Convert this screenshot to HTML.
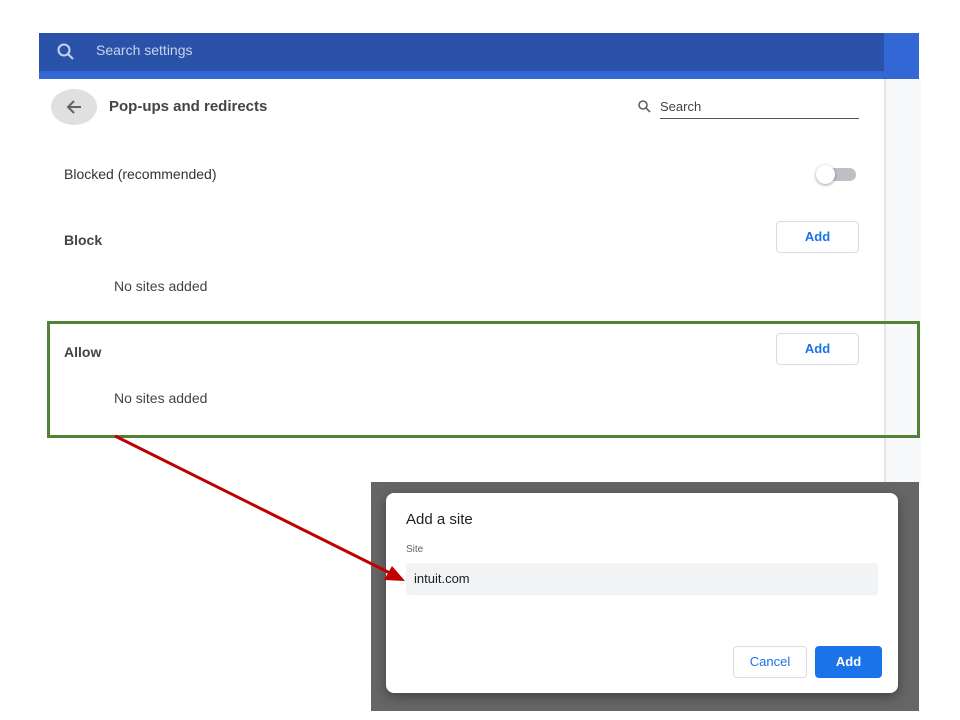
<!DOCTYPE html>
<html><head><style>
body{margin:0;width:960px;height:720px;background:#fff;position:relative;overflow:hidden;font-family:"Liberation Sans",sans-serif;}
.a{position:absolute;}
.btn{position:absolute;border:1px solid #dadce0;border-radius:4px;color:#1a73e8;font-weight:bold;font-size:13px;text-align:center;background:#fff;box-sizing:border-box;}
</style></head><body>
<div class="a" style="left:39px;top:33px;width:880px;height:46px;background:#3367d6"></div>
<div class="a" style="left:39px;top:33px;width:845px;height:38px;background:#2a52a8"></div>
<svg class="a" style="left:55px;top:41px" width="22" height="22" viewBox="0 0 22 22"><circle cx="9" cy="9" r="5.5" fill="none" stroke="#c8d4ee" stroke-width="2"/><path d="M13 13l5 5" stroke="#c8d4ee" stroke-width="2"/></svg>
<div class="a" style="left:96px;top:42px;color:#c8d4ee;font-size:14px">Search settings</div>
<div class="a" style="left:884px;top:79px;width:35px;height:406px;background:#f8f9fa;border-left:2px solid #e6e6e6"></div>
<div class="a" style="left:51px;top:89px;width:46px;height:36px;border-radius:50%;background:#e0e0e0"></div>
<svg class="a" style="left:64px;top:97px" width="20" height="20" viewBox="0 0 20 20"><path d="M17 10H4M10 4l-6 6 6 6" fill="none" stroke="#5f6368" stroke-width="2"/></svg>
<div class="a" style="left:109px;top:98px;font-size:15px;color:#333;font-weight:bold;color:#444">Pop-ups and redirects</div>
<svg class="a" style="left:637px;top:99px" width="16" height="16" viewBox="0 0 16 16"><circle cx="6" cy="6" r="4" fill="none" stroke="#5f6368" stroke-width="1.6"/><path d="M9 9l4 4" stroke="#5f6368" stroke-width="1.6"/></svg>
<div class="a" style="left:660px;top:99px;font-size:13px;color:#444">Search</div>
<div class="a" style="left:660px;top:118px;width:199px;height:1px;background:#555"></div>
<div class="a" style="left:64px;top:166px;font-size:14px;color:#333">Blocked (recommended)</div>
<div class="a" style="left:820px;top:168px;width:36px;height:13px;border-radius:7px;background:#bdc1c6"></div>
<div class="a" style="left:816px;top:165px;width:19px;height:19px;border-radius:50%;background:#fff;box-shadow:0 1px 3px rgba(0,0,0,.4)"></div>
<div class="a" style="left:64px;top:232px;font-size:14px;color:#444;font-weight:bold">Block</div>
<div class="btn" style="left:776px;top:221px;width:83px;height:32px;line-height:30px">Add</div>
<div class="a" style="left:114px;top:278px;font-size:14px;color:#444">No sites added</div>
<div class="a" style="left:47px;top:321px;width:873px;height:117px;border:3px solid #538135;box-sizing:border-box"></div>
<div class="a" style="left:64px;top:344px;font-size:14px;color:#444;font-weight:bold">Allow</div>
<div class="btn" style="left:776px;top:333px;width:83px;height:32px;line-height:30px">Add</div>
<div class="a" style="left:114px;top:390px;font-size:14px;color:#444">No sites added</div>
<div class="a" style="left:371px;top:482px;width:548px;height:229px;background:#666"></div>
<div class="a" style="left:386px;top:493px;width:512px;height:200px;background:#fff;border-radius:8px;box-shadow:0 4px 12px rgba(0,0,0,.35)"></div>
<div class="a" style="left:406px;top:511px;font-size:15px;color:#202124">Add a site</div>
<div class="a" style="left:406px;top:544px;font-size:10px;color:#5f6368">Site</div>
<div class="a" style="left:406px;top:563px;width:472px;height:32px;background:#f1f3f4;border-radius:4px"></div>
<div class="a" style="left:414px;top:571px;font-size:13px;color:#202124">intuit.com</div>
<div class="btn" style="left:733px;top:646px;width:74px;height:32px;line-height:30px;font-weight:normal">Cancel</div>
<div class="btn" style="left:815px;top:646px;width:67px;height:32px;line-height:32px;background:#1a73e8;color:#fff;border:none">Add</div>
<svg class="a" style="left:0;top:0" width="960" height="720"><path d="M115 436L392 574" stroke="#c00000" stroke-width="3"/><path d="M405 581L384 580L392 566Z" fill="#c00000"/></svg>
</body></html>
